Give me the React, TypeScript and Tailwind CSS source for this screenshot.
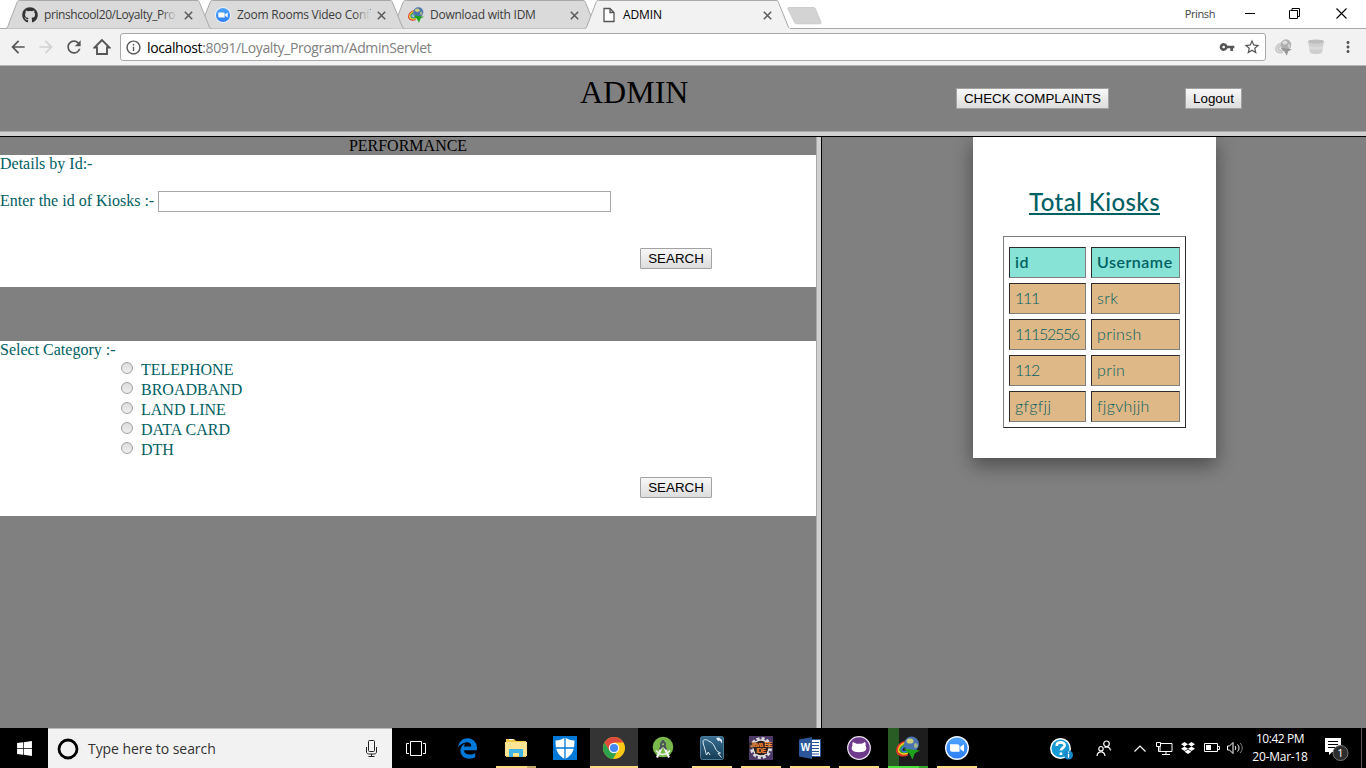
import type { ReactNode } from 'react';
import { FaGithub, FaDropbox, FaWindows } from 'react-icons/fa';
import { FaEdgeLegacy } from 'react-icons/fa6';
import { MdArrowBack, MdArrowForward, MdRefresh, MdInfoOutline, MdVpnKey, MdStarBorder, MdMoreVert } from 'react-icons/md';

const ui = "font-['Open_Sans',sans-serif]";

function ZoomIcon({ size, ring }: { size: number; ring: string }) {
  return (
    <svg width={size} height={size} viewBox="0 0 24 24" className="shrink-0">
      <defs>
        <linearGradient id="zg" x1="0" y1="0" x2="0" y2="1">
          <stop offset="0" stopColor="#4da3ff" />
          <stop offset="1" stopColor="#2d7ff5" />
        </linearGradient>
      </defs>
      <circle cx="12" cy="12" r="12" fill={ring} />
      <circle cx="12" cy="12" r="10.6" fill="url(#zg)" />
      <path d="M5 8.2h7.5a2 2 0 0 1 2 2v5.6H7a2 2 0 0 1-2-2z" fill="#fff" />
      <path d="M15.3 10.8 19 8.3v7.4l-3.7-2.5z" fill="#fff" />
    </svg>
  );
}

function IdmIcon({ size, gray = false }: { size: number; gray?: boolean }) {
  const c = gray
    ? ['#c4c4c4', '#d8d8d8', '#c0c0c0', '#b0b0b0', '#dedede', '#959595', '#c8c8c8']
    : ['#e5392b', '#f8d020', '#35a53c', '#4a74b0', '#cfd07a', '#20a31c', '#3c78e8'];
  return (
    <svg width={size} height={size} viewBox="0 0 24 24" className="shrink-0">
      <path d="M10 5.500C4 6.500.5 11 1.200 15.500c.8 4 6 5 10.500 3" fill="none" stroke={c[0]} strokeWidth="2" />
      <path d="M10 7C5 8 2.200 11.500 2.800 15c.8 3 5 3.600 9 2" fill="none" stroke={c[1]} strokeWidth="1.800" />
      <path d="M10 8.500c-4 1-6 3.500-5.600 6 .8 2.300 4 2.500 8 1" fill="none" stroke={c[2]} strokeWidth="1.800" />
      <path d="M10 10c-3 1-4.500 2.500-4.200 4.200.7 1.500 3 1.500 5.500.8" fill="none" stroke={c[6]} strokeWidth="1.400" />
      <circle cx="15.500" cy="8" r="7.500" fill={c[3]} />
      <ellipse cx="14" cy="5" rx="3.500" ry="2.600" fill={c[4]} />
      <ellipse cx="19.800" cy="9.500" rx="1.900" ry="2.600" fill={c[4]} opacity=".7" />
      <path d="M7.500 12.500 24 14.500l-5.200 2.700L16.500 23.500l-3.200-6z" fill={c[5]} />
    </svg>
  );
}

function FileIcon() {
  return (
    <svg width="16" height="16" viewBox="0 0 16 16" className="shrink-0">
      <path d="M3.500 1.500h6l4 4v9h-10zM9.500 1.500v4h4" transform="translate(-.5 0)" fill="#fff" stroke="#555" strokeWidth="1.300" />
    </svg>
  );
}

function CloseX() {
  return (
    <svg width="9" height="9" viewBox="0 0 9 9" className="shrink-0">
      <path d="m.8.8 7.400 7.400M8.200.8.8 8.200" stroke="#5a5a5a" strokeWidth="1.500" />
    </svg>
  );
}

function Tab({ icon, title, active, z, track }: { icon: ReactNode; title: string; active?: boolean; z: string; track: string }) {
  return (
    <div className={`relative h-[29px] w-[193px] shrink-0 ${z}`}>
      <svg width="206" height="29" viewBox="0 0 206 29" className="absolute left-0 top-0">
        <path
          d="M0 28.500C1.500 28 1.500 27 2 26L11 2.500C11.500 1 12 .5 13.500.5H191c1.500 0 2 .5 2.500 2l9.500 23.500c.5 1.500 1 2.500 2.500 2.500"
          fill={active ? '#f2f2f2' : '#dadada'}
          stroke="#a9a9a9"
        />
        {active && <path d="M1 28.500h204" stroke="#f2f2f2" />}
      </svg>
      <div className="relative flex h-[29px] items-center pl-4">
        {icon}
        <div className={`ml-[6px] w-[133px] whitespace-nowrap text-[12px] ${track} ${active ? 'text-black' : 'text-[#3c3c3c]'}`}>{title}</div>
        {!active && <div className="relative -ml-4 h-5 w-4 bg-linear-to-r from-transparent to-[#dadada]" />}
        <div className="ml-[7px] flex pt-px"><CloseX /></div>
      </div>
    </div>
  );
}

const tabs = [
  { title: 'prinshcool20/Loyalty_Pro', icon: <FaGithub size={16} color="#333" />, z: 'z-30', track: 'tracking-[-0.42px]' },
  { title: 'Zoom Rooms Video Conf', icon: <ZoomIcon size={16} ring="#e9f2fd" />, z: 'z-20', track: 'tracking-[-0.25px]' },
  { title: 'Download with IDM', icon: <IdmIcon size={16} />, z: 'z-10', track: 'tracking-[-0.25px]' },
  { title: 'ADMIN', icon: <FileIcon />, z: 'z-40', active: true, track: 'tracking-[-0.1px]' },
];

function Browser() {
  return (
    <header className={ui}>
      <div className="flex h-[29px] items-start border-b border-[#a9a9a9] bg-white pl-[6px]">
        {tabs.map((t) => <Tab key={t.title} {...t} />)}
        <svg width="36" height="19" viewBox="0 0 36 19" className="ml-[9px] mt-[6px]">
          <path d="M2 1.500h24c1.500 0 2 .5 2.500 1.500l5.500 13c.5 1 0 1.800-1 1.800H10c-1.500 0-2-.5-2.500-1.500L1 3c-.5-1 0-1.500 1-1.500z" fill="#d3d3d3" stroke="#c3c3c3" strokeWidth=".7" />
        </svg>
        <div className="ml-auto flex h-7 items-center">
          <span className="mr-[30px] text-[11px] tracking-[-0.4px] text-[#444]">Prinsh</span>
          <svg width="106" height="13" viewBox="0 0 106 13" className="-mt-[2px] mr-[15px]" fill="none" stroke="#000">
            <path d="M0 6.500h10M45.500 3.500h7v8h-8v-8zM47 3V1.500h7.500v8H53" />
            <path d="m91.500 1.500 10 10M101.500 1.500l-10 10" strokeWidth="1.100" />
          </svg>
        </div>
      </div>
      <div className="flex h-[37px] items-center border-b border-[#b6b6b6] bg-[#f2f2f2] pl-[8px]">
        <MdArrowBack size={20} color="#555" />
        <MdArrowForward size={20} color="#d2d2d2" className="ml-[8px]" />
        <MdRefresh size={20} color="#555" className="ml-[8px]" />
        <svg width="18" height="18" viewBox="0 0 18 18" className="ml-[9px]">
          <path d="M9 2 1.500 9.500H4V16h10V9.500h2.500z" fill="none" stroke="#555" strokeWidth="1.900" />
        </svg>
        <div className="ml-[9px] flex h-7 w-[1146px] items-center rounded-[3px] border border-[#a9a9a9] bg-white pl-[4px]">
          <MdInfoOutline size={17} color="#555" />
          <span className="ml-[5px] text-[14px] tracking-[-0.38px] text-[#808080]"><span className="text-black">localhost</span>:8091/Loyalty_Program/AdminServlet</span>
          <MdVpnKey size={16} color="#555" className="ml-auto mr-[8px]" />
          <MdStarBorder size={18} color="#555" className="mr-[4px]" />
        </div>
        <div className="ml-[9px]"><IdmIcon size={17} gray /></div>
        <svg width="18" height="18" viewBox="0 0 18 18" className="ml-[15px]">
          <path d="m1 3 2 11.500c1 2 11 2 12 0L17 3z" fill="#cfcfcf" />
          <ellipse cx="9" cy="3.500" rx="8" ry="2" fill="#bdbdbd" />
          <path d="m2 8 .5 3c3 1 10 1 13 0l.5-3c-3 1-11 1-14 0z" fill="#dadada" />
        </svg>
        <MdMoreVert size={18} color="#555" className="ml-[14px]" />
      </div>
    </header>
  );
}

function Button({ children, className }: { children: string; className: string }) {
  return (
    <button className={`flex h-[21px] items-center justify-center whitespace-nowrap border border-[#a2a2a2] bg-linear-to-b from-[#f8f8f8] to-[#dddddd] font-['Liberation_Sans',sans-serif] text-[13.33px] text-black ${className}`}>
      {children}
    </button>
  );
}

const categories = ['TELEPHONE', 'BROADBAND', 'LAND LINE', 'DATA CARD', 'DTH'];
const kiosks = [['111', 'srk'], ['11152556', 'prinsh'], ['112', 'prin'], ['gfgfjj', 'fjgvhjjh']];

function Performance() {
  return (
    <section className="h-full w-[816px] bg-[#808080] text-[16px] leading-[18px] text-[#006064]">
      <div className="h-[18px] text-center text-black">PERFORMANCE</div>
      <form className="h-[132px] bg-white">
        <div>Details by Id:-</div>
        <div className="mt-[18px] flex items-center">
          <label className="pb-[2px]">Enter the id of Kiosks :-</label>
          <input className="ml-[4px] h-[21px] w-[453px] border border-[#a9a9a9] bg-white" />
        </div>
        <Button className="ml-[640px] mt-[36px] w-[72px] rounded-[1px]">SEARCH</Button>
      </form>
      <form className="mt-[54px] h-[175px] bg-white">
        <div className="h-[18px]">Select Category :-</div>
        {categories.map((c) => (
          <div key={c} className="flex h-5 pl-[121px]">
            <span className="mt-[3px] h-3 w-3 rounded-full border border-[#a0a0a0] bg-linear-to-b from-[#dcdcdc] to-[#eeeeee]" />
            <span className="ml-[8px] leading-[22px]">{c}</span>
          </div>
        ))}
        <Button className="ml-[640px] mt-[18px] w-[72px] rounded-[1px]">SEARCH</Button>
      </form>
    </section>
  );
}

const cellBorder = 'border border-t-[#2c2c2c] border-l-[#2c2c2c] border-r-[#808080] border-b-[#808080]';

function Kiosks() {
  return (
    <section className="h-full flex-1 overflow-hidden bg-[#808080] pl-[151px] font-['Lato',sans-serif] text-[#006064]">
      <div className="h-[321px] w-[243px] bg-white px-[30px] pt-[45px] shadow-[0_8px_17px_0_rgba(0,0,0,0.22),0_6px_20px_0_rgba(0,0,0,0.22)]">
        <h2 className="h-[54px] whitespace-nowrap text-center text-[24px] font-medium leading-[40px] tracking-[0.42px] underline decoration-2 underline-offset-[2px]">Total Kiosks</h2>
        <div className="grid h-[192px] w-[183px] grid-cols-[77px_89px] grid-rows-[repeat(5,31px)] gap-[5px] border border-t-[#808080] border-l-[#808080] border-r-[#2c2c2c] border-b-[#2c2c2c] pl-[5px] pt-[10px] text-[16px]">
          {['id', 'Username'].map((h) => <div key={h} className={`flex items-center bg-[#87e3d6] pb-[2px] pl-[5px] font-semibold tracking-[0.5px] ${cellBorder}`}>{h}</div>)}
          {kiosks.flat().map((v) => (
            <div key={v} className={`flex items-center bg-[#deb887] pb-[2px] pl-[5px] font-light ${/^\d/.test(v) ? 'tracking-[-1.3px]' : 'tracking-[0.35px]'} ${cellBorder}`}>{v}</div>
          ))}
        </div>
      </div>
    </section>
  );
}

function Explorer() {
  return (
    <svg width="22" height="20" viewBox="0 0 22 20">
      <path d="M1 1h8l2 2h10v16H1z" fill="#f3c748" />
      <path d="M0 4h22v14H0z" fill="#ffe593" />
      <path d="M4 11h14v8h-4v-4H8v4H4z" fill="#3fb4e5" />
      <path d="M4 1h4v1H4z" fill="#fff" />
    </svg>
  );
}

function Defender() {
  return (
    <svg width="24" height="24" viewBox="0 0 24 24">
      <path d="M0 0h24v24H0z" fill="#0078d7" />
      <path d="M12 1.500c3 2 6 2.700 9.500 3C21.500 13 20 19 12 23 4 19 2.500 13 2.500 4.500c3.500-.3 6.500-1 9.500-3z" fill="#fff" />
      <path d="M12 1v22M2 12h20" stroke="#0078d7" strokeWidth="1.300" />
    </svg>
  );
}

function Chrome() {
  return (
    <svg width="22" height="22" viewBox="0 0 22 22">
      <circle cx="11" cy="11" r="11" fill="#fbc916" />
      <path d="M11 11 1.500 5.500A11 11 0 0 1 20.500 5.500H11z" fill="#de4b3e" />
      <path d="M1.500 5.500A11 11 0 0 0 10 22l4.500-8H7z" fill="#2ca24c" />
      <path d="M1.500 5.500 6.500 13.500 11 11 9 5.500z" fill="#de4b3e" />
      <circle cx="11" cy="11" r="5.200" fill="#fff" />
      <circle cx="11" cy="11" r="4.100" fill="#4688f1" />
    </svg>
  );
}

function AndroidStudio() {
  return (
    <svg width="22" height="24" viewBox="0 0 22 24">
      <circle cx="11" cy="11" r="10.300" fill="#79b84a" />
      <path d="M9.800 11 5 21.500M12.200 11 17 21.500" stroke="#f2f2f2" strokeWidth="2.200" />
      <path d="M4 14.500c3 3.500 5.500 4 7 4s4-.5 7-4" fill="none" stroke="#eee" strokeWidth="1.500" />
      <path d="M9.700 4h2.600v3H9.700z" fill="#4a5358" />
      <circle cx="11" cy="8.300" r="3" fill="#4a5358" />
      <path d="m8.500 9.500-1.800 4h2l2.300-3 2.300 3h2l-1.800-4z" fill="#4a5358" />
      <circle cx="11" cy="8.300" r="1.100" fill="#93c66c" />
    </svg>
  );
}

function MySql() {
  return (
    <svg width="24" height="24" viewBox="0 0 24 24">
      <defs><linearGradient id="msg" x1="0" y1="0" x2="0" y2="1"><stop stopColor="#386f92" /><stop offset="1" stopColor="#173c55" /></linearGradient></defs>
      <rect x=".5" y=".5" width="23" height="23" rx="2" fill="url(#msg)" stroke="#497b99" />
      <path d="M6.500 19c-.5-1.500-1-3-1.200-4.500C4.500 11 2.800 7.500 3 5c1-2 4-1.500 6 .2 3.500 1 5.500 5 7 8.500 1 1.500 2.500 2.500 4.500 3.300l-2.500.5 3.500 4M6.500 19l1.700-3 1.800 3" fill="none" stroke="#dceaf1" strokeWidth="1" />
      <path d="m16 2 2 3 2-.5 2 3V4l-2-1.500-1-1z" fill="#e9f3f7" />
    </svg>
  );
}

function JavaEE() {
  return (
    <div className="relative h-6 w-6 bg-[#4d3a67]">
      <svg width="24" height="24" viewBox="0 0 24 24" className="absolute inset-0">
        <circle cx="12" cy="12" r="9.500" fill="none" stroke="#ddd" strokeWidth="3" strokeDasharray="3 2" />
        <circle cx="12" cy="12" r="8" fill="#2b2020" stroke="#ddd" strokeWidth="1.500" />
        <path d="M0 6.500h24v6H0zM6 12h12v6H6z" fill="#2b2020" opacity=".75" />
      </svg>
      <div className="relative pt-[6px] text-center font-['Liberation_Sans',sans-serif] text-[6.500px] font-bold leading-[6px] tracking-[-0.4px] text-[#ff8b32]">
        <div className="whitespace-nowrap">Java EE</div><div>IDE</div>
      </div>
    </div>
  );
}

function Word() {
  return (
    <div className="relative h-[22px] w-[22px]">
      <svg width="22" height="22" viewBox="0 0 22 22" className="absolute inset-0">
        <path d="M12 2.500h9.500v17H12z" fill="#fff" stroke="#2b579a" />
        <path d="M13 5.500h7M13 8.500h7M13 11.500h7M13 14.500h7M13 17h7" stroke="#2b579a" />
        <path d="M0 2.500 13 0v22L0 19.500z" fill="#2b579a" />
      </svg>
      <div className="relative w-[13px] text-center font-['Liberation_Sans',sans-serif] text-[10px] font-bold leading-[22px] text-white">W</div>
    </div>
  );
}

function GithubDesktop() {
  return (
    <svg width="24" height="24" viewBox="0 0 24 24">
      <circle cx="12" cy="12" r="11.300" fill="#6e3a8c" stroke="#e9e1ee" strokeWidth="1.200" />
      <path d="M6 6 9.500 7.800h5L18 6c.8 1.200.8 2.300.5 3.500 1 1.500 1 3.200.3 4.500-1.700 3-11.900 3-13.600 0-.7-1.300-.7-3 .3-4.500C5.200 8.300 5.200 7.200 6 6z" fill="#fff" />
    </svg>
  );
}

const apps: { id: string; icon: ReactNode; bar: string }[] = [
  { id: 'edge', icon: <FaEdgeLegacy size={21} color="#0078d7" />, bar: '' },
  { id: 'explorer', icon: <Explorer />, bar: 'bg-linear-to-r from-[#fddb84] from-[78%] to-[#c4a86b] to-[78%]' },
  { id: 'defender', icon: <Defender />, bar: '' },
  { id: 'chrome', icon: <Chrome />, bar: 'bg-[#fddb84]' },
  { id: 'studio', icon: <AndroidStudio />, bar: '' },
  { id: 'mysql', icon: <MySql />, bar: 'bg-[#fddb84]' },
  { id: 'java', icon: <JavaEE />, bar: 'bg-[#fddb84]' },
  { id: 'word', icon: <Word />, bar: 'bg-[#fddb84]' },
  { id: 'github', icon: <GithubDesktop />, bar: 'bg-[#fddb84]' },
  { id: 'idm', icon: <IdmIcon size={24} />, bar: 'bg-linear-to-r from-[#4be03c] from-[78%] to-[#31a52b] to-[78%]' },
  { id: 'zoom', icon: <ZoomIcon size={24} ring="#f4f8ff" />, bar: 'bg-[#fddb84]' },
];

function Taskbar() {
  return (
    <footer className={`flex h-10 bg-black ${ui}`}>
      <div className="flex w-12 items-center justify-center"><FaWindows size={17} color="#fff" /></div>
      <div className="flex w-[344px] items-center border-t border-[#b8b8b8] bg-[#f2f2f2] pl-[9px] pr-[14px]">
        <svg width="22" height="22" viewBox="0 0 22 22"><circle cx="11" cy="11" r="9" fill="none" stroke="#000" strokeWidth="2.800" /></svg>
        <span className="ml-[9px] text-[14px] tracking-[-0.06px] text-[#333]">Type here to search</span>
        <svg width="13" height="17" viewBox="0 0 13 17" className="ml-auto" fill="none" stroke="#222">
          <rect x="3.500" y=".5" width="6" height="11" rx="1" />
          <path d="M1.500 7v5c0 1 1 2 2 2h6c1 0 2-1 2-2V7M6.500 14v2.500M3.500 16.500h6" />
        </svg>
      </div>
      <div className="flex w-[51px] items-center pl-[14px]">
        <svg width="20" height="15" viewBox="0 0 20 15" fill="none" stroke="#fff">
          <path d="M4.500.5h11v14h-11zM3 2.500H.5v10H3M17 2.500h2.500v10H17" />
        </svg>
      </div>
      <div className="flex gap-px">
        {apps.map((a) => (
          <div key={a.id} className={`flex w-12 flex-col items-center ${a.id === 'chrome' ? 'bg-[#343434]' : ''}`}>
            <div className={`flex h-[38px] items-center justify-center pt-[2px] ${a.id === 'idm' ? 'w-10 bg-linear-to-r from-[#285c24] from-[27%] to-[#1d1d1d] to-[27%]' : 'w-12'}`}>{a.icon}</div>
            <div className={`h-[2px] ${a.id === 'chrome' ? 'w-12' : 'w-10'} ${a.bar}`} />
          </div>
        ))}
      </div>
      <div className="ml-auto flex items-center text-white">
        <svg width="23" height="23" viewBox="0 0 23 23" className="mt-[2px]">
          <circle cx="10.500" cy="10.500" r="10.500" fill="#fff" /><circle cx="10.500" cy="10.500" r="9" fill="#159ad6" />
          <path d="M6.700 8c0-5 8-4.500 8-.8 0 2.700-3.600 2.600-3.800 5.300M10.900 14.500v2.500" fill="none" stroke="#fff" strokeWidth="2.600" />
          <circle cx="18.500" cy="17" r="4.500" fill="#1588c7" /><path d="M18.500 15.800v4M18.500 13.500v1.300" stroke="#fff" strokeWidth="1.300" />
        </svg>
        <svg width="16" height="17" viewBox="0 0 16 17" className="ml-[23px]" fill="none" stroke="#fff" strokeWidth="1.200">
          <circle cx="10.500" cy="3.800" r="2.800" /><path d="M8.500 7.500c2.500-1.500 5.500-.5 6 3" />
          <circle cx="5" cy="8.700" r="2.200" /><path d="M1 16c.5-5.500 7.500-5.500 8 0" />
        </svg>
        <svg width="12" height="7" viewBox="0 0 12 7" className="ml-[22px]"><path d="m.5 6.500 5.500-5.500 5.500 5.500" fill="none" stroke="#fff" strokeWidth="1.200" /></svg>
        <svg width="17" height="15" viewBox="0 0 17 15" className="ml-[10px]" fill="none" stroke="#fff">
          <path d="M5 2.500h11v8H4V6M10 10.500v3M6 13.500h8M.5 1.500h4v4h-4zM2.500 5.500v5H4" />
        </svg>
        <FaDropbox size={14} className="ml-[8px]" />
        <svg width="16" height="10" viewBox="0 0 16 10" className="ml-[9px]" fill="none" stroke="#fff"><path d="M.5.500h13v8H.5zM14 3.500h1.500v3H14" /><path d="M2 2h5v5H2z" fill="#fff" stroke="none" /></svg>
        <svg width="17" height="14" viewBox="0 0 17 14" className="ml-[7px]" fill="none" stroke="#fff"><path d="M.5 5h2L6 1.500v11L2.500 9h-2zM8 5c1 1 1 3 0 4M10.500 3.500c2 2 2 5 0 7" /><path d="M13 2c3 3 3 7 0 10" stroke="#888" /></svg>
        <div className="ml-[5px] w-[62px] whitespace-nowrap text-center text-[12px] leading-[18px] tracking-[-0.25px]">
          <div className="tracking-[-0.45px]">10:42 PM</div><div>20-Mar-18</div>
        </div>
        <div className="relative ml-[14px] h-[26px] w-6">
          <svg width="24" height="26" viewBox="0 0 24 26"><path d="M0 3h16v14H7l-3 3v-3H0z" fill="#fff" /><path d="M3 6.500h10M3 9.500h10M3 12.500h7" stroke="#000" /><circle cx="15.500" cy="18" r="7.500" fill="#2d2d2d" stroke="#777" /></svg>
          <span className="absolute left-[8px] top-[10px] w-[15px] text-center text-[11px] leading-4">1</span>
        </div>
        <div className="ml-[12px] h-10 w-px bg-[#555]" />
        <div className="w-1" />
      </div>
    </footer>
  );
}

export default function App() {
  return (
    <div className="flex h-[768px] w-[1366px] flex-col overflow-hidden bg-[#808080] font-['Liberation_Serif',serif]">
      <Browser />
      <div className="flex h-[65px] bg-[#808080]">
        <h1 className="ml-[580px] w-[376px] pt-[8px] text-[32px] leading-[37px] text-black">ADMIN</h1>
        <Button className="mt-[22px] w-[153px]">CHECK COMPLAINTS</Button>
        <Button className="ml-[76px] mt-[22px] w-[57px]">Logout</Button>
      </div>
      <div className="h-[6px] shrink-0 border-b border-t border-b-black border-t-[#a9a9a9] bg-[#d0d0d0]" />
      <main className="flex h-[591px]">
        <Performance />
        <div className="w-[6px] border-l border-r border-l-[#a9a9a9] border-r-black bg-[#d0d0d0]" />
        <Kiosks />
      </main>
      <Taskbar />
    </div>
  );
}
